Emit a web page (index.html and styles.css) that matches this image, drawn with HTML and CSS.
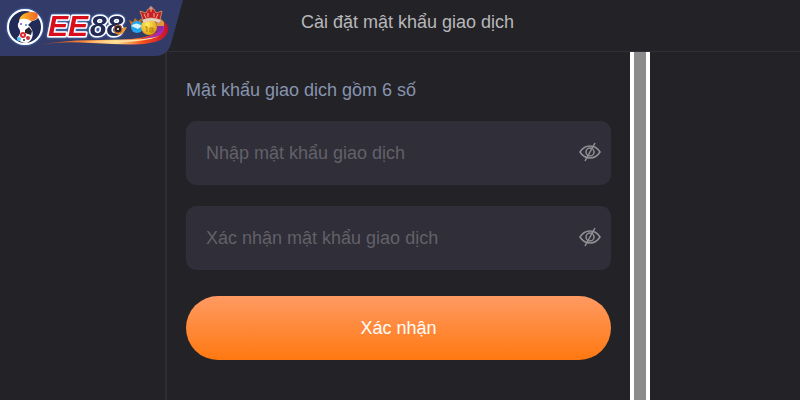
FILE: index.html
```html
<!DOCTYPE html>
<html lang="vi">
<head>
    <meta charset="UTF-8">
    <meta name="viewport" content="width=device-width, initial-scale=1.0">
    <title>Cài đặt mật khẩu giao dịch</title>
    <link rel="stylesheet" href="styles.css">
</head>
<body>
    <!-- Logo badge over the top left corner -->
    <svg class="logo" width="184" height="57" viewBox="0 0 184 57" role="img" aria-label="EE88">
        <defs>
            <linearGradient id="swoosh" x1="0" x2="1" y1="0" y2="0">
                <stop offset="0" stop-color="#9c3a2c"/>
                <stop offset="0.35" stop-color="#ff8a3a"/>
                <stop offset="0.6" stop-color="#ffe08a"/>
                <stop offset="0.8" stop-color="#f4511c"/>
                <stop offset="1" stop-color="#c4102c"/>
            </linearGradient>
            <linearGradient id="hat" x1="0" x2="1" y1="0" y2="0">
                <stop offset="0" stop-color="#ffc227"/>
                <stop offset="1" stop-color="#ef6223"/>
            </linearGradient>
            <radialGradient id="gold" cx="0.4" cy="0.35" r="0.7">
                <stop offset="0" stop-color="#ffee62"/>
                <stop offset="1" stop-color="#dd9808"/>
            </radialGradient>
            <filter id="glow" x="-20%" y="-30%" width="140%" height="160%">
                <feDropShadow dx="0" dy="0" stdDeviation="1" flood-color="#4a9cf0"/>
            </filter>
        </defs>
        <path d="M0 0H183L171 44Q167 56 155 56H0Z" fill="#333b69"/>
        <!-- Round mascot -->
        <g filter="url(#glow)">
            <circle cx="25" cy="27" r="17" fill="#222c58" stroke="#fff" stroke-width="2"/>
            <path d="M19 22C20 15 27 12 36 13C40 17 38 20 32 21L28 25C35 30 34 40 27 43Q20 43 17 38C21 34 21 31 18 27Q17 24 19 22Z" fill="#fff"/>
        </g>
        <path d="M19 20C22 12 31 11 37 13C39 17 37 20 31 21Q25 17 19 20Z" fill="url(#hat)"/>
        <circle cx="21" cy="24" r="1" fill="#7a4dcc"/>
        <circle cx="26" cy="25" r="1" fill="#398cd0"/>
        <path d="M25 30L29 27L32 31L31 35L25 33Z" fill="#282431"/>
        <circle cx="23" cy="35" r="3" fill="#e5292d"/>
        <circle cx="23" cy="35" r="1" fill="#fff"/>
        <circle cx="28" cy="38" r="2" fill="#c4343c"/>
        <circle cx="19" cy="39" r="2" fill="#4dc4ec"/>
        <circle cx="24" cy="40" r="1" fill="#242430"/>
        <!-- Swoosh -->
        <path d="M40 45C72 38 106 41 132 39C152 37 165 31 161 20C170 24 171 33 162 39C152 45 134 45 112 44C86 43 66 40 40 45Z" fill="url(#swoosh)"/>
        <path d="M158 21C165 27 158 36 142 39C158 39 168 32 163 23Z" fill="#a62bbb"/>
        <path d="M84 42C112 43 146 43 162 35C151 40 116 41 84 42Z" fill="#ffe3a0"/>
        <g class="logo-text" filter="url(#glow)">
            <text x="48" y="36" fill="#d9101c">EE</text>
            <text x="90" y="36" fill="#202957">88</text>
        </g>
        <!-- Billiard ball, lottery balls and crown -->
        <path d="M113 31Q119 35 122 28L127 27L124 32Q119 38 113 31Z" fill="#f29a2e"/>
        <circle cx="118" cy="29" r="4" fill="#27202c" stroke="#b96c35"/>
        <circle cx="118" cy="29" r="1" fill="#fff"/>
        <path d="M129 20L133 22L135 18L138 21L142 18L141 25H131Z" fill="#bd7429"/>
        <circle cx="137" cy="27" r="6" fill="#23a4ee"/>
        <path d="M131 26Q136 21 142 26L138 29Z" fill="#d4f2ff"/>
        <circle cx="158" cy="27" r="5" fill="#8f2b9c"/>
        <path d="M156 22L159 23L161 19L164 22L164 26H157Z" fill="#d99a3d"/>
        <circle cx="149" cy="27" r="8" fill="url(#gold)"/>
        <path d="M145 27H147V32M150 28H153V32H150V28M151 30H153" fill="none" stroke="#b57909"/>
        <path d="M143 20L140 11L146 13L148 9H154L156 13L162 11L160 20Q151 16 143 20Z" fill="#c51f25" stroke="#c9855c"/>
        <path d="M142 20Q151 16 161 20L159 23Q151 19 144 23Z" fill="#e6cfb8"/>
        <path d="M149 8H153M151 6V12M144 14L146 18M148 13V17M154 13V17M158 14L156 18" stroke="#efb18c" fill="none"/>
    </svg>

    <header class="top-bar">
        <h1>Cài đặt mật khẩu giao dịch</h1>
    </header>

    <main class="content">
        <div class="panel">
            <form class="password-form">
                <p class="form-title">Mật khẩu giao dịch gồm 6 số</p>
                <div class="field">
                    <input type="password" placeholder="Nhập mật khẩu giao dịch" aria-label="Nhập mật khẩu giao dịch">
                    <button type="button" class="eye-button" aria-label="Hiện mật khẩu">
                        <svg width="22" height="22" viewBox="0 0 22 22">
                            <path d="M1 10C6 2 16 2 21 10C16 18 6 18 1 10Z"/>
                            <circle cx="11" cy="10" r="4"/>
                            <path d="M16 1L6 19"/>
                        </svg>
                    </button>
                </div>
                <div class="field">
                    <input type="password" placeholder="Xác nhận mật khẩu giao dịch" aria-label="Xác nhận mật khẩu giao dịch">
                    <button type="button" class="eye-button" aria-label="Hiện mật khẩu">
                        <svg width="22" height="22" viewBox="0 0 22 22">
                            <path d="M1 10C6 2 16 2 21 10C16 18 6 18 1 10Z"/>
                            <circle cx="11" cy="10" r="4"/>
                            <path d="M16 1L6 19"/>
                        </svg>
                    </button>
                </div>
                <button type="submit" class="submit-button">Xác nhận</button>
            </form>
            <div class="scroll-track"></div>
        </div>
    </main>
</body>
</html>
```
FILE: styles.css
```css
* {
    box-sizing: border-box;
}

body {
    display: flex;
    flex-direction: column;
    min-height: 100vh;
    margin: 0;
    font-family: "Liberation Sans", Arial, sans-serif;
    font-size: 18px;
    background-color: #232227;
}

.logo {
    position: absolute;
    top: 0;
    left: 0;
}

.logo-text {
    font-size: 30px;
    font-weight: bold;
    font-style: italic;
    stroke: #ffffff;
    stroke-width: 3px;
    stroke-linejoin: round;
    paint-order: stroke;
}

/* Header and content share the same three columns */
.top-bar,
.content {
    display: grid;
    grid-template-columns: 165fr 485fr 150fr;
}

.top-bar {
    border-bottom: 1px solid #2f2e34;
}

.top-bar h1 {
    grid-column: 2;
    margin: 0;
    padding: 10px 0 17px;
    font-size: 18px;
    font-weight: normal;
    line-height: 24px;
    text-align: center;
    color: #b8b7b9;
}

.content {
    flex: 1;
}

.panel {
    grid-column: 2;
    display: flex;
    border-left: 2px solid #2f2e34;
}

.password-form {
    flex: 1;
    display: flex;
    flex-direction: column;
    padding: 26px 19px 38px;
}

.form-title {
    margin: 0 0 19px;
    line-height: 24px;
    color: #8794ae;
}

.field {
    display: flex;
    align-items: center;
    height: 64px;
    margin-bottom: 21px;
    padding: 0 10px 0 20px;
    border-radius: 10px;
    background-color: #302e39;
}

.field input {
    flex: 1;
    min-width: 0;
    padding: 0;
    border: none;
    outline: none;
    background: transparent;
    font: inherit;
    color: #b8b7b9;
}

.field input::placeholder {
    color: #626168;
}

.eye-button {
    display: flex;
    padding: 0;
    border: none;
    background: transparent;
    cursor: pointer;
}

.eye-button svg {
    fill: none;
    stroke: #929195;
    stroke-width: 1.5;
}

.submit-button {
    height: 64px;
    margin-top: 5px;
    border: none;
    border-radius: 32px;
    background: linear-gradient(#ff9a63, #ff7810);
    font: inherit;
    color: #ffffff;
    cursor: pointer;
}

.scroll-track {
    width: 20px;
    border: solid #ffffff;
    border-width: 0 4px;
    background-color: #8b8b8b;
}
```
